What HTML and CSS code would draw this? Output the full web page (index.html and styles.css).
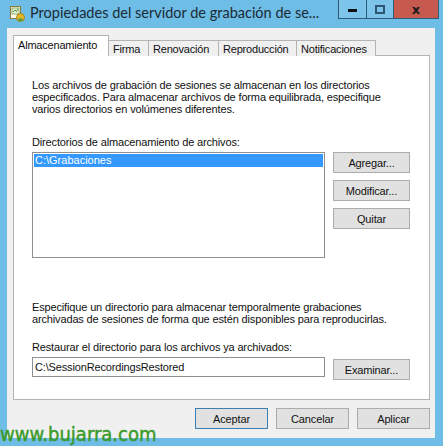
FILE: index.html
```html
<!DOCTYPE html>
<html lang="es">
<head>
    <meta charset="UTF-8">
    <title>Propiedades del servidor de grabación de sesiones</title>
    <link rel="stylesheet" href="styles.css">
</head>
<body>
    <div class="window">
        <!-- Barra de titulo -->
        <div class="titlebar">
            <svg class="app-icon" width="16" height="16" viewBox="0 0 16 16">
                <rect x="1.5" y="0.5" width="10" height="12" fill="#fdfbe8" stroke="#8a7d3a"/>
                <rect x="3" y="2" width="7" height="6" fill="#e6f0d8" stroke="#7c9a5a" stroke-width="0.8"/>
                <path d="M4 6 L6 4 L7.5 5.5 L9 3" fill="none" stroke="#4c8a30" stroke-width="1"/>
                <circle cx="11.5" cy="11.5" r="4" fill="#e0b72a" stroke="#9a7a10" stroke-width="0.8"/>
                <path d="M9.5 12.5 h4 v2.5 h-4 z" fill="#4fa03a"/>
            </svg>
            <span class="title">Propiedades del servidor de grabación de se...</span>
            <div class="win-buttons">
                <div class="wbtn min"><span></span></div>
                <div class="wbtn max"><span></span></div>
                <div class="wbtn close">x</div>
            </div>
        </div>

        <div class="client">
            <div class="tabs">
                <div class="tab active">Almacenamiento</div>
                <div class="tab">Firma</div>
                <div class="tab">Renovación</div>
                <div class="tab">Reproducción</div>
                <div class="tab">Notificaciones</div>
            </div>

            <div class="panel">
                <p class="info first">Los archivos de grabación de sesiones se almacenan en los directorios especificados. Para almacenar archivos de forma equilibrada, especifique varios directorios en volúmenes diferentes.</p>

                <p class="label lbl-dirs">Directorios de almacenamiento de archivos:</p>
                <div class="row">
                    <div class="listbox">
                        <div class="item selected">C:\Grabaciones</div>
                    </div>
                    <div class="side-buttons">
                        <button class="btn">Agregar...</button>
                        <button class="btn">Modificar...</button>
                        <button class="btn">Quitar</button>
                    </div>
                </div>

                <p class="info second">Especifique un directorio para almacenar temporalmente grabaciones archivadas de sesiones de forma que estén disponibles para reproducirlas.</p>

                <p class="label lbl-restore">Restaurar el directorio para los archivos ya archivados:</p>
                <div class="row">
                    <div class="textbox">C:\SessionRecordingsRestored</div>
                    <button class="btn browse">Examinar...</button>
                </div>
            </div>

            <div class="footer">
                <button class="btn default">Aceptar</button>
                <button class="btn">Cancelar</button>
                <button class="btn">Aplicar</button>
            </div>
        </div>

        <div class="watermark">www.bujarra.com</div>
    </div>
</body>
</html>
```

FILE: styles.css
```css
body {
    margin: 0;
    padding: 0;
    background-color: #6dbde6;
}
.window {
    position: relative;
    width: 443px;
    height: 446px;
    background-color: #6dbde6;
    overflow: hidden;
}

/* Barra de titulo */
.titlebar {
    height: 28px;
    display: flex;
    align-items: flex-start;
}
.app-icon {
    margin: 6px 0 0 9px;
}
.title {
    margin: 4px 0 0 5px;
    font-family: Lato, "Noto Sans", sans-serif;
    font-size: 14.5px;
    color: #1c2a33;
    white-space: nowrap;
    overflow: hidden;
    width: 308px;
}
.win-buttons {
    display: flex;
}
.wbtn {
    height: 18px;
    border: 1px solid #2f5b78;
    border-top: none;
    display: flex;
    align-items: center;
    justify-content: center;
}
.wbtn.min {
    width: 27px;
    background-color: #7cc4ea;
}
.wbtn.min span {
    width: 9px;
    height: 3px;
    background-color: #111;
    margin-top: 3px;
}
.wbtn.max {
    width: 26px;
    border-left: none;
    background-color: #7cc4ea;
}
.wbtn.max span {
    width: 6px;
    height: 5px;
    border: 2px solid #2e5670;
}
.wbtn.close {
    width: 44px;
    border-left: none;
    background-color: #c75a4e;
    font-family: "DejaVu Sans", sans-serif;
    font-weight: bold;
    font-size: 13px;
    color: #1a1a1a;
    line-height: 1;
}

/* Area cliente */
.client {
    margin: 0 8px 0 7px;
    height: 410px;
    background-color: #f0f0f0;
    padding: 8px 0 0 6px;
    box-sizing: border-box;
    font-family: "Liberation Sans", Arial, sans-serif;
    font-size: 11px;
    color: #111;
}
.tabs {
    display: flex;
    align-items: flex-end;
    height: 20px;
    position: relative;
    z-index: 1;
}
.tab {
    height: 15px;
    line-height: 16px;
    padding: 0 4px;
    border: 1px solid #b4b4b4;
    border-bottom: none;
    margin-left: -1px;
    background-color: #f0f0f0;
    letter-spacing: -0.2px;
    white-space: nowrap;
}
.tab:nth-child(2) { width: 31px; }
.tab:nth-child(3) { width: 61px; }
.tab:nth-child(4) { width: 69px; }
.tab:nth-child(5) { width: 70px; }
.tab.active {
    margin-left: 0;
    height: 20px;
    line-height: 18px;
    width: 86px;
    background-color: #ffffff;
    position: relative;
    z-index: 2;
}
.tab.active + .tab {
    border-left: none;
    margin-left: 0;
}
.panel {
    width: 417px;
    height: 345px;
    margin-top: -1px;
    border: 1px solid #b4b4b4;
    background-color: #ffffff;
    box-sizing: border-box;
    padding: 0 0 0 18px;
}
.info {
    margin: 0;
    width: 375px;
    line-height: 12px;
    letter-spacing: -0.15px;
}
.info.first {
    margin-top: 23px;
}
.info.second {
    margin-top: 43px;
}
.label {
    margin: 0;
    line-height: 12px;
    letter-spacing: -0.15px;
}
.lbl-dirs {
    margin-top: 21px;
}
.lbl-restore {
    margin-top: 16px;
}
.row {
    display: flex;
    align-items: flex-start;
    margin-top: 4px;
    gap: 8px;
}
.listbox {
    width: 293px;
    height: 106px;
    border: 1px solid #8f8f8f;
    box-sizing: border-box;
    padding: 1px;
}
.item {
    height: 13px;
    line-height: 13px;
    padding-left: 1px;
}
.item.selected {
    background-color: #3399ff;
    color: #ffffff;
}
.side-buttons {
    display: flex;
    flex-direction: column;
    gap: 7px;
}
.btn {
    width: 77px;
    height: 21px;
    padding: 0;
    border: 1px solid #acacac;
    background-color: #e1e1e1;
    font-family: "Liberation Sans", Arial, sans-serif;
    font-size: 11px;
    color: #111;
    letter-spacing: -0.15px;
}
.textbox {
    width: 293px;
    height: 20px;
    line-height: 18px;
    border: 1px solid #8f8f8f;
    box-sizing: border-box;
    padding-left: 2px;
    letter-spacing: -0.15px;
}
.btn.browse {
    margin-top: 2px;
}
.footer {
    display: flex;
    justify-content: flex-end;
    gap: 8px;
    width: 417px;
    margin-top: 8px;
}
.footer .btn {
    width: 73px;
}
.footer .btn.default {
    border-color: #3c7fb1;
}

/* Marca de agua */
.watermark {
    position: absolute;
    left: 0;
    bottom: 2px;
    font-family: "DejaVu Sans Condensed", "DejaVu Sans", sans-serif;
    font-size: 20px;
    color: #3a9a28;
    -webkit-text-stroke: 0.4px #3a9a28;
    line-height: 1;
}
```
